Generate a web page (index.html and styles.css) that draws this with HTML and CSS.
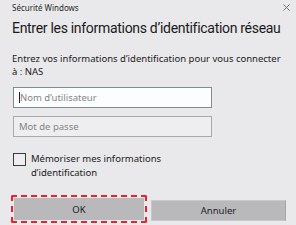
FILE: index.html
```html
<!DOCTYPE html>
<html lang="fr">
<head>
<meta charset="utf-8">
<link rel="stylesheet" href="styles.css">
</head>
<body>
<div class="dialog">
  <div class="titlebar">
    <span class="apptitle">Sécurité Windows</span>
    <svg class="close" width="7" height="7" viewBox="0 0 7 7"><path d="M0.5 0.5 L6.5 6.5 M6.5 0.5 L0.5 6.5" stroke="#6a6a6a" stroke-width="0.9" fill="none"/></svg>
  </div>
  <h1 class="heading">Entrer les informations d’identification réseau</h1>
  <p class="desc">Entrez vos informations d’identification pour vous connecter à : NAS</p>
  <div class="fields">
    <div class="field focused"><span class="caret"></span><span class="ph">Nom d’utilisateur</span></div>
    <div class="field"><span class="ph">Mot de passe</span></div>
  </div>
  <div class="remember">
    <span class="box"></span>
    <span class="rlabel">Mémoriser mes informations<br>d’identification</span>
  </div>
  <div class="buttons">
    <div class="okwrap"><div class="btn ok">OK</div></div>
    <div class="btn cancel">Annuler</div>
  </div>
</div>
</body>
</html>
```

FILE: styles.css
```css
html, body {
  margin: 0;
  padding: 0;
  background: #e9e8ea;
}
.dialog {
  width: 296px;
  height: 225px;
  font-family: "Noto Sans", sans-serif;
  color: #1e1e1e;
  padding: 0 10px 0 12px;
  box-sizing: border-box;
  display: flex;
  flex-direction: column;
  overflow: hidden;
}
.titlebar {
  display: flex;
  justify-content: space-between;
  align-items: center;
  height: 14px;
}
.apptitle {
  font-size: 8px;
  color: #2a2a2a;
}
.close {
  margin-right: -4px;
}
.heading {
  margin: 5px 0 0 0;
  font-family: Roboto, "Noto Sans", sans-serif;
  font-weight: normal;
  font-size: 14px;
  letter-spacing: -0.3px;
  line-height: 18px;
  white-space: nowrap;
  color: #1a1a1a;
}
.desc {
  margin: 15px 0 0 0;
  font-size: 9.5px;
  line-height: 13px;
  color: #222;
}
.fields {
  margin-top: 9px;
  margin-left: 1px;
  display: flex;
  flex-direction: column;
  gap: 8px;
}
.field {
  width: 199px;
  height: 21px;
  box-sizing: border-box;
  border: 1px solid #a9a9ab;
  background: #eeedf0;
  display: flex;
  align-items: center;
  padding-left: 5px;
  font-size: 9.5px;
  color: #858585;
}
.field.focused {
  background: #fcfdff;
  border-color: #7d8a98;
}
.caret {
  width: 1px;
  height: 11px;
  background: #222;
}
.remember {
  margin-top: 15px;
  margin-left: 1px;
  display: flex;
  align-items: flex-start;
  gap: 5px;
}
.box {
  width: 13px;
  height: 13px;
  box-sizing: border-box;
  border: 1px solid #3a3a3a;
  background: #eeedf0;
  margin-top: 1px;
  flex: none;
}
.rlabel {
  font-size: 9.5px;
  line-height: 14px;
  color: #222;
}
.buttons {
  margin-top: 15px;
  margin-left: -1px;
  display: flex;
  align-items: flex-start;
  gap: 4px;
}
.okwrap {
  border: 2px dashed #e8232b;
  border-radius: 2px;
  padding: 1px;
}
.btn {
  box-sizing: border-box;
  display: flex;
  align-items: center;
  justify-content: center;
  background: #b9b9bb;
  font-size: 9.5px;
  color: #222;
}
.ok {
  width: 130px;
  height: 22px;
}
.cancel {
  width: 135px;
  height: 21px;
  margin-top: 5px;
  border: 1px solid #c8c8ca;
  border-right-color: #a5a5a7;
}
```
